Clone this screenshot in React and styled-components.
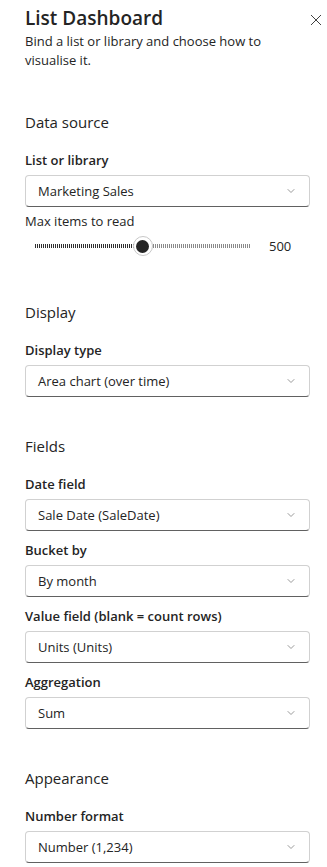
import React from 'react';
import styled, { createGlobalStyle } from 'styled-components';

const GlobalStyle = createGlobalStyle`
  html, body {
    margin: 0;
    padding: 0;
    background: #ffffff;
  }
  body {
    font-family: "Segoe UI", "Open Sans", "Noto Sans", sans-serif;
    color: #242424;
  }
`;

const Pane = styled.div`
  width: 327px;
  box-sizing: border-box;
  padding: 4px 17px 8px 25px;
  display: flex;
  flex-direction: column;
`;

const Header = styled.div`
  display: flex;
  align-items: center;
  justify-content: space-between;
  margin-right: -12px;
  height: 28px;
`;

const Title = styled.h1`
  margin: 0;
  font-size: 19px;
  font-weight: 600;
  line-height: 28px;
  color: #242424;
`;

const CloseButton = styled.button`
  border: none;
  background: none;
  padding: 0;
  width: 12px;
  height: 12px;
  margin-top: 4px;
  display: flex;
  align-items: center;
  justify-content: center;
  color: #424242;
`;

const Description = styled.p`
  margin: 0;
  font-size: 13px;
  line-height: 19px;
  color: #242424;
  padding-right: 30px;
`;

const Section = styled.section`
  display: flex;
  flex-direction: column;
  margin-top: ${p => p.$top}px;
`;

const SectionTitle = styled.h2`
  margin: 0 0 17px;
  font-size: 15px;
  font-weight: 400;
  line-height: 22px;
  color: #242424;
`;

const Field = styled.div`
  display: flex;
  flex-direction: column;
  & + & {
    margin-top: 9px;
  }
`;

const Label = styled.label`
  font-size: 13px;
  font-weight: 600;
  line-height: 20px;
  color: #242424;
`;

const PlainLabel = styled.div`
  margin-top: 4px;
  font-size: 13px;
  line-height: 20px;
  color: #242424;
`;

const Dropdown = styled.div`
  margin-top: 5px;
  height: 32px;
  box-sizing: border-box;
  border: 1px solid #d1d1d1;
  border-bottom-color: #616161;
  border-radius: 4px;
  display: flex;
  align-items: center;
  justify-content: space-between;
  padding: 0 12px 0 12px;
  font-size: 13px;
  color: #242424;
`;

const Chevron = styled.svg`
  width: 12px;
  height: 12px;
  color: #9a9a9a;
`;

const SliderRow = styled.div`
  margin-top: 5px;
  margin-bottom: 7px;
  height: 20px;
  display: flex;
  align-items: center;
  padding-left: 10px;
`;

const Track = styled.div`
  position: relative;
  width: 215px;
  height: 4px;
  display: flex;
`;

const TrackPart = styled.div`
  height: 4px;
  background: repeating-linear-gradient(
    90deg,
    ${p => p.$color} 0 1px,
    transparent 1px 2px
  );
`;

const Thumb = styled.div`
  position: absolute;
  top: 50%;
  width: 20px;
  height: 20px;
  box-sizing: border-box;
  border-radius: 50%;
  background: #ffffff;
  border: 1px solid #c8c8c8;
  transform: translate(-50%, -50%);
  display: flex;
  align-items: center;
  justify-content: center;
  &::after {
    content: '';
    width: 13px;
    height: 13px;
    border-radius: 50%;
    background: #242424;
  }
`;

const SliderValue = styled.span`
  margin-left: 19px;
  font-size: 13px;
  color: #242424;
`;

const ChevronDown = () => (
  <Chevron viewBox="0 0 12 12" fill="none">
    <path d="M3 4.5 L6 7.5 L9 4.5" stroke="currentColor" strokeWidth="1" strokeLinecap="round" strokeLinejoin="round" />
  </Chevron>
);

const Select = ({ label, value }) => (
  <Field>
    <Label>{label}</Label>
    <Dropdown>
      <span>{value}</span>
      <ChevronDown />
    </Dropdown>
  </Field>
);

const Slider = ({ value, max }) => {
  const pct = (value / max) * 100;
  return (
    <SliderRow>
      <Track>
        <TrackPart $color="#303030" style={{ width: pct + '%' }} />
        <TrackPart $color="#8a8a8a" style={{ width: 100 - pct + '%' }} />
        <Thumb style={{ left: pct + '%' }} />
      </Track>
      <SliderValue>{value}</SliderValue>
    </SliderRow>
  );
};

export default function App() {
  return (
    <>
      <GlobalStyle />
      <Pane>
        <Header>
          <Title>List Dashboard</Title>
          <CloseButton aria-label="Close">
            <svg width="12" height="12" viewBox="0 0 12 12">
              <path d="M1 1 L11 11 M11 1 L1 11" stroke="currentColor" strokeWidth="1" />
            </svg>
          </CloseButton>
        </Header>
        <Description>Bind a list or library and choose how to visualise it.</Description>

        <Section $top={41}>
          <SectionTitle>Data source</SectionTitle>
          <Field>
            <Label>List or library</Label>
            <Dropdown>
              <span>Marketing Sales</span>
              <ChevronDown />
            </Dropdown>
            <PlainLabel>Max items to read</PlainLabel>
            <Slider value={500} max={1000} />
          </Field>
        </Section>

        <Section $top={38}>
          <SectionTitle>Display</SectionTitle>
          <Select label="Display type" value="Area chart (over time)" />
        </Section>

        <Section $top={38}>
          <SectionTitle>Fields</SectionTitle>
          <Select label="Date field" value="Sale Date (SaleDate)" />
          <Select label="Bucket by" value="By month" />
          <Select label="Value field (blank = count rows)" value="Units (Units)" />
          <Select label="Aggregation" value="Sum" />
        </Section>

        <Section $top={38}>
          <SectionTitle>Appearance</SectionTitle>
          <Select label="Number format" value="Number (1,234)" />
        </Section>
      </Pane>
    </>
  );
}
